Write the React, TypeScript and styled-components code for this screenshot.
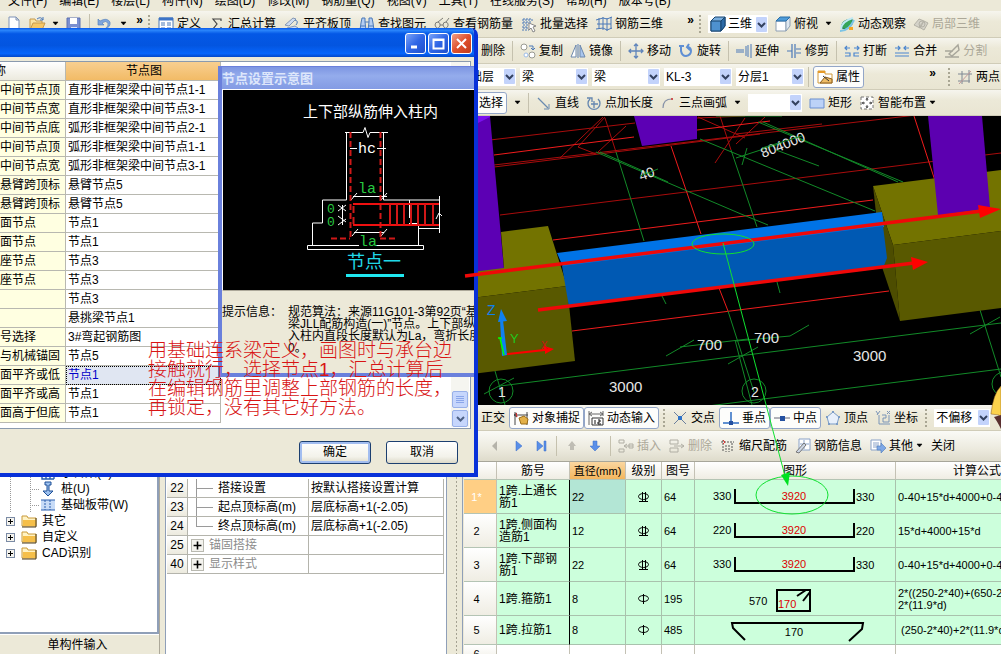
import React from 'react';
import styled, { createGlobalStyle, css } from 'styled-components';

const GlobalStyle = createGlobalStyle`
  * { box-sizing: border-box; }
  html, body, #root { height: 100%; }
  body {
    margin: 0;
    overflow: hidden;
    background: #ece9d8;
    color: #000;
    font: 12px/14px "Liberation Sans", "Noto Sans CJK SC", sans-serif;
  }
  button, select { font: inherit; color: inherit; }
`;

/* ---------- icons ---------- */

const B = '#4a78b8';
const L = '#9dbde8';
const G = '#9a9a92';

const glyphs: Record<string, React.ReactNode> = {
  file: <path d="M3 1h7l3 3v11H3z M10 1v3h3" fill="#fff" stroke="#7f93b8" />,
  folderOpen: (
    <>
      <path d="M1 14V3h5l1 2h6v3" fill="#fbe3a2" stroke="#c79a4c" />
      <path d="M1 14l3-7h12l-3 7z" fill="#f6c766" stroke="#c79a4c" />
      <path d="M8 3q4-3 6 1m0-3v3h-3" fill="none" stroke={B} />
    </>
  ),
  save: (
    <>
      <path d="M1 2h13v12H2l-1-1z" fill="#7b8fd0" stroke="#5c70b0" />
      <path d="M4 2h7v6H4z" fill="#fff" />
      <path d="M5 11h6v3H5z" fill="#d9e0f5" />
    </>
  ),
  undo: <path d="M1 3v6h6L5 7q4-3 6 0 1 3-3 6 6-2 5-7-3-5-10-1z" fill="#7fa5dd" stroke={B} strokeWidth=".6" />,
  define: (
    <>
      <path d="M1 2h14v12H1z" fill="#fff" stroke={B} />
      <path d="M1 3h14" stroke="#3d74c7" strokeWidth="3" />
      <path d="M3 7h4M3 9h4M3 12h4M9 7h4M9 9h4M9 12h4" stroke={B} />
    </>
  ),
  sigma: <path d="M12 5V3H4l4 5-4 5h8v-2" fill="none" stroke="#444" strokeWidth="1.2" />,
  flush: (
    <>
      <path d="M1 9l8-7 3 1-7 7zM3 12l8-2 3 2-8 3z" fill="#cfdcf0" stroke="#8598b4" />
      <path d="M11 4q4 1 1 5" stroke={B} fill="none" />
    </>
  ),
  binoculars: (
    <>
      <path d="M3 2h3v4l1 8H1l1-7zM10 2h3l1 5 1 7H9l1-8z" fill="#b3cdf2" stroke={B} />
      <path d="M6 6h4M2 10h4M10 10h4" stroke={B} />
    </>
  ),
  glasses: <path d="M1 9q0-3 3-3 3 1 2 4-3 5-5-1zM9 9q0-3 3-3 3 1 2 4-3 5-5-1zM6 9h3M4 6l5-4M12 6l3-4" fill="none" stroke="#7d7d78" />,
  batch: (
    <>
      <path d="M3 2v12M6 2v12M9 2v5M1 4h12M1 7h7M1 11h6M1 14h7" stroke={B} strokeDasharray="2 1" fill="none" />
      <path d="M8 7l7 3-3 1 2 4-2 1-2-4-2 2z" fill="#fff" stroke="#888" />
    </>
  ),
  rebar3d: <path d="M3 2v11M7 1v13M11 2v13M15 1v12M0 4l7-2 4 1 5-2M0 13l7-1 4 2 5-2M1 8h14" fill="none" stroke={B} />,
  cube: (
    <>
      <path d="M1 5l4-4h10v9l-4 5H1z" fill="#7aaede" stroke="#16446e" />
      <path d="M1 5h10v10H1z" fill="#4e91cf" stroke="#16446e" />
      <path d="M11 5l4-4v9l-4 5z" fill="#2c6aa6" stroke="#16446e" />
    </>
  ),
  topView: (
    <>
      <path d="M1 5h10v10H1z" fill="#fff" stroke="#8d9fb3" />
      <path d="M11 5l4-4v9l-4 5z" fill="#dfe8f0" stroke="#8d9fb3" />
      <path d="M1 5l4-4h10l-4 4z" fill="#4e9bd8" stroke="#2b6ea8" />
    </>
  ),
  orbit: (
    <>
      <path d="M3 12Q1 4 13 3 15 11 7 13z" fill="#35a55a" stroke="#1c7a4a" />
      <path d="M2 13Q3 5 14 2" stroke="#bfe8f5" strokeWidth="2" fill="none" />
      <path d="M1 15q9 0 14-11" stroke="#7cc4e6" strokeWidth="2" fill="none" />
      <path d="M10 11h4v3h-4z" fill="#f5a623" />
    </>
  ),
  local3d: (
    <>
      <path d="M1 9l5-6 5 2-4 7z M6 11l5-6 4 2-4 7z" fill="#d4d2c8" stroke="#b3b1a6" />
      <circle cx="9" cy="8" r="3" fill="none" stroke="#b3b1a6" />
    </>
  ),
  erase: <path d="M2 12l7-9 5 4-7 7z" fill="#f3b6b6" stroke="#a66" />,
  copy: (
    <>
      <circle cx="4" cy="4" r="3" fill="#fff" stroke={G} />
      <circle cx="12" cy="12" r="3" fill="#fff" stroke={G} />
      <circle cx="6" cy="12" r="2" fill="#fff" stroke={L} />
      <path d="M9 3h4v4m-2-2l2 2 2-2" fill="none" stroke={B} />
    </>
  ),
  mirror: (
    <>
      <path d="M6 2v12H1z" fill="#fff" stroke="#6c88ad" />
      <path d="M10 2v12h5z" fill="#a9c6ee" stroke="#6c88ad" />
      <path d="M8 1v14" stroke="#5b7fb5" />
    </>
  ),
  move: <path d="M8 1v14M1 8h14M6 3l2-2 2 2M6 13l2 2 2-2M3 6L1 8l2 2M13 6l2 2-2 2" fill="none" stroke="#5f84bb" strokeWidth="1.3" />,
  rotate: <path d="M3 3v5q1 5 5 5 5-1 5-5 0-3-3-4M1 3h5M11 1L9 4l3 3" fill="none" stroke="#5f8fd4" strokeWidth="2" />,
  extend: <path d="M0 7h8M0 9h8M10 3v10M12 2v12M15 1v14" stroke="#4a78b8" fill="none" />,
  trim: <path d="M1 8h5M6 1v14M9 1v14M10 6h5M10 10h5" stroke="#4a78b8" fill="none" strokeWidth="1.2" />,
  breakIt: <path d="M1 5h5M3 3L1 5l2 2M10 5h5m-2-2l2 2-2 2M1 10h5v3H1M15 10h-5v3h5" fill="none" stroke="#4a85cf" strokeWidth="1.2" />,
  join: <path d="M1 5h5M4 3l2 2-2 2M10 5h5M12 3l-2 2 2 2M1 10h14M1 13h14" fill="none" stroke="#4a85cf" strokeWidth="1.2" />,
  split: <path d="M1 8h8M1 14h14M5 11L14 2l1 5-7 6z" fill="none" stroke="#a8a69b" strokeWidth="1.4" />,
  props: (
    <>
      <path d="M1 2h7v3h7v9H1z" fill="#fff" stroke="#d29a3a" />
      <path d="M1 3h7" stroke="#e69a28" strokeWidth="2" />
      <path d="M3 14l5-6 7 2v4z" fill="#eebc66" stroke="#8b5d1c" />
      <path d="M6 7l6 5" stroke="#333" />
    </>
  ),
  twoPoint: (
    <>
      <path d="M5 2v13M12 1v13M1 5h14M1 12h12" fill="none" stroke="#7f8894" />
      <path d="M2 15L14 2" stroke="#c49a9a" />
    </>
  ),
  line: (
    <>
      <path d="M2 3l10 10" stroke="#6a8bb0" strokeWidth="1.2" />
      <path d="M13 9v5H8" stroke="#6a8bb0" fill="none" />
    </>
  ),
  pointLen: <path d="M4 4a6 6 0 1 0 8 0M1 3h5v4M8 6v7M5 9h7" fill="none" stroke="#6486b0" strokeWidth="1.3" />,
  arc: (
    <>
      <path d="M3 13Q3 4 12 4" fill="none" stroke="#8793a8" strokeWidth="1.2" />
      <path d="M11 3h2v2h-2z" fill="#c55" />
    </>
  ),
  rect: <path d="M1 4h14v9H1z" fill="#bcd2f7" stroke="#6a8fd0" />,
  smart: (
    <>
      <path d="M2 2h12v12H2z" fill="#fff" stroke="#777" strokeDasharray="3 2" />
      <path d="M8 3v3M8 10v3M3 8h3M10 8h3M7 5l1-2 1 2M7 11l1 2 1-2M5 7L3 8l2 1M11 7l2 1-2 1" fill="none" stroke="#555" />
    </>
  ),
  snap: (
    <>
      <path d="M2 2v13M14 2v13M1 5h14M4 3L1 5l3 2" stroke="#444" fill="none" />
      <path d="M6 8l5-2 4 3-1 5H8z" fill="#e3b048" stroke="#9a6d17" />
      <path d="M3 3l1 4" stroke="#d22" />
    </>
  ),
  dynInput: (
    <>
      <path d="M1 1v14M15 1v5M1 4h14M4 2L1 4l3 2M12 2l3 2-3 2" stroke="#666" fill="none" />
      <path d="M4 8h11v7H4z" fill="#fff" stroke="#333" />
      <path d="M7 10v4M10 10h2v2h-2v2h3" stroke="#111" fill="none" />
    </>
  ),
  cross: (
    <>
      <path d="M2 2l12 12M14 2L2 14" stroke="#6b7f9c" />
      <path d="M6 6h4v4H6z" fill="#2f74c9" />
    </>
  ),
  perp: (
    <>
      <path d="M8 2v11M0 13h16" stroke="#2d6cc4" strokeWidth="1.5" />
      <path d="M6 11h4v4H6z" fill="#2450a0" />
    </>
  ),
  mid: (
    <>
      <path d="M0 8h16" stroke="#667" />
      <path d="M6 6h5v5H6z" fill="#2450a0" />
    </>
  ),
  vertex: (
    <>
      <path d="M8 2l6 5-2 7H4L2 7z" fill="#e8f0fb" stroke="#7b9cc6" />
      <path d="M7 1h2v2H7zM13 6h2v2h-2zM1 6h2v2H1zM3 13h2v2H3zM11 13h2v2h-2z" fill="#7b9cc6" />
    </>
  ),
  coord: <path d="M4 5v9h11M1 1l2 3M5 1L2 5M7 5h4v3H8v4h6V5M12 1l3 3M15 1l-3 3" fill="none" stroke="#7b95b8" />,
  prev: <path d="M10 3v10L5 8z" fill="#b5b3aa" />,
  next: <path d="M6 3v10l6-5z" fill="#5a8fe8" stroke="#3b6fcb" strokeWidth=".5" />,
  last: <path d="M4 3v10l6-5zM11 3h2v10h-2z" fill="#5a8fe8" stroke="#3b6fcb" strokeWidth=".5" />,
  up: <path d="M8 3l4 5h-2v4H6V8H4z" fill="#bfbdb4" />,
  down: <path d="M8 13l5-5h-3V3H6v5H3z" fill="#5a8fe8" stroke="#3b6fcb" strokeWidth=".5" />,
  insertRow: <path d="M1 2h5v3H1zM1 11h5v3H1zM6 8h9M9 6L6 8l3 2M11 6h4v4h-4z" fill="none" stroke="#b0aea4" />,
  deleteRow: <path d="M1 2h8v4H1zM1 10h8v4H1zM5 8h10M12 6l3 2-3 2" fill="none" stroke="#b0aea4" />,
  scale: (
    <>
      <path d="M3 2v12M6 7v7M9 7v7M12 5v9M1 4h13" stroke="#555" fill="none" strokeDasharray="2 1" />
      <path d="M3 2l2 2-2 2" stroke="#d33" fill="none" />
    </>
  ),
  info: (
    <>
      <path d="M4 1h11v11H4z" fill="#fff" stroke="#8aa2c8" />
      <path d="M9 2v9M5 6h9" stroke="#8aa2c8" />
      <path d="M1 14l8-9 2 2-7 8z" fill="#ccd6e6" stroke="#777" />
    </>
  ),
  other: (
    <>
      <path d="M1 2h10v10H1z" fill="#fff" stroke="#8aa2c8" />
      <path d="M3 5h6M3 7h6M3 9h4" stroke="#8aa2c8" />
      <path d="M7 8h4V5l5 5-5 5v-3H7z" fill="#7fa8e6" stroke={B} strokeWidth=".6" />
    </>
  ),
  pileCap: <path d="M2 2h12v12M2 2v12h12M6 2v12M10 2v12M2 8h12" fill="none" stroke="#2a5fae" strokeWidth="1.4" />,
  pile: <path d="M5 1h6v3H9v6h4l-5 5-5-5h4V4H5z" fill="#9cc0ee" stroke="#1c4f96" />,
  strip: (
    <>
      <path d="M1 3h14v10H1z" fill="#c7dbf7" />
      <path d="M1 3h14M1 13h14" stroke="#2a5fae" />
      <path d="M5 3v10M10 3v10" stroke="#2a5fae" strokeDasharray="2 1" />
    </>
  ),
  folder: (
    <>
      <path d="M1 13V3h5l1 2h8v8z" fill="#fff3c4" stroke="#c99a3b" />
      <path d="M2 7h13v6H2z" fill="#f5bf4a" />
      <path d="M1 14h14V5" fill="none" stroke="#4a3a18" />
    </>
  ),
};

const IconSvg = styled.svg`
  flex: none;
  display: block;
  overflow: visible;
`;
const Icon = ({ name }: { name: string }) => (
  <IconSvg width="16" height="16" viewBox="0 0 16 16" aria-hidden="true">
    {glyphs[name]}
  </IconSvg>
);

/* ---------- tool bars ---------- */

const AppShell = styled.div`
  position: relative;
  display: flex;
  flex-direction: column;
  height: 100%;
  overflow: hidden;
`;

const MenuBar = styled.nav`
  flex: none;
  display: flex;
  align-items: flex-end;
  gap: 12px;
  height: 11px;
  padding: 0 8px 3px;
  overflow: hidden;
`;
const MenuItem = styled.button`
  flex: none;
  padding: 0;
  border: 0;
  background: none;
  line-height: 14px;
  white-space: nowrap;
`;

const Toolbar = styled.div<{ $indent?: number; $tall?: boolean }>`
  flex: none;
  display: flex;
  align-items: center;
  gap: 7px;
  height: ${p => (p.$tall ? 31 : 26)}px;
  padding-left: ${p => p.$indent ?? 0}px;
  overflow: hidden;
  white-space: nowrap;
  border-bottom: 1px solid ${p => (p.$tall ? '#a7a69a' : '#d0ccb8')};
  background: linear-gradient(#f6f5ee, #ece9d8 40%, #e9e5d2);
  ${p => p.$tall && css`background: linear-gradient(#fafaf6, #eceade 60%, #dedbcb);`}
`;
const MainToolbar = styled(Toolbar)`
  height: 27px;
  gap: 0;
`;
const Group = styled.div<{ $width?: number; $gap?: number }>`
  flex: none;
  display: flex;
  align-items: center;
  gap: ${p => p.$gap ?? 8}px;
  ${p => p.$width && css`width: ${p.$width}px;`}
`;
const Tool = styled.button<{ $framed?: boolean }>`
  flex: none;
  display: flex;
  align-items: center;
  gap: 3px;
  height: 22px;
  padding: 0;
  border: 0;
  background: none;
  white-space: nowrap;
  &:disabled { color: #aca899; }
  ${p => p.$framed && css`
    padding: 0 3px;
    border: 1px solid #93a6c8;
    border-radius: 3px;
    background: #fdfdfb;
  `}
`;
const Sep = styled.span`
  flex: none;
  width: 1px;
  height: 20px;
  background: #c5c1ae;
`;
const Grip = styled.span`
  flex: none;
  width: 2px;
  height: 18px;
  background: repeating-linear-gradient(#a9a693 0 2px, transparent 2px 4px);
`;
const More = styled.span`
  flex: none;
  margin-left: auto;
  padding: 0 5px 8px 0;
  font-weight: bold;
  line-height: 12px;
`;
const Caret = () => (
  <IconSvg width="7" height="4" viewBox="0 0 7 4" aria-hidden="true">
    <path d="M1 0h5L3.500 3z" fill="#000" stroke="#000" strokeWidth=".5" />
  </IconSvg>
);

const ComboFrame = styled.label<{ $width: number }>`
  flex: none;
  display: flex;
  align-items: center;
  gap: 2px;
  width: ${p => p.$width}px;
  height: 18px;
  padding: 1px 1px 1px 2px;
  background: #fff;
`;
const ComboSelect = styled.select`
  flex: 1;
  min-width: 0;
  height: 16px;
  padding: 0;
  border: 0;
  outline: 0;
  appearance: none;
  background: none;
  line-height: 16px;
`;
const ComboArrow = () => (
  <IconSvg width="11" height="15" viewBox="0 0 11 15" aria-hidden="true">
    <rect width="11" height="15" rx="1" fill="#c3d3fb" />
    <path d="M2 6l3.500 3.500L9 6" fill="none" stroke="#33415f" strokeWidth="2" />
  </IconSvg>
);
const Combo = ({ value, width, name, icon }: { value: string; width: number; name: string; icon?: string }) => (
  <ComboFrame $width={width}>
    {icon && <Icon name={icon} />}
    <ComboSelect aria-label={name} defaultValue={value}>
      <option>{value}</option>
    </ComboSelect>
    <ComboArrow />
  </ComboFrame>
);

const TextTool = ({ icon, label, disabled, framed, caret }: {
  icon?: string; label: string; disabled?: boolean; framed?: boolean; caret?: boolean;
}) => (
  <Tool type="button" disabled={disabled} $framed={framed}>
    {icon && <Icon name={icon} />}
    {label}
    {caret && <Caret />}
  </Tool>
);
const IconTool = ({ icon, label }: { icon: string; label: string }) => (
  <Tool type="button" aria-label={label}><Icon name={icon} /></Tool>
);

/* ---------- workspace ---------- */

const Workspace = styled.main`
  flex: 1;
  min-height: 0;
  display: grid;
  grid-template-columns: 160px 287px 16px minmax(0, 1fr);
  background: #ece9d8;
`;

const TreeColumn = styled.aside`
  display: flex;
  flex-direction: column;
  min-height: 0;
  border-right: 1px solid #aca899;
`;
const Tree = styled.ul`
  flex: 1;
  min-height: 0;
  margin: 0;
  padding: 349px 0 0;
  overflow: hidden;
  list-style: none;
  background: #fff;
  border-right: 2px solid #8f9fb8;
  border-bottom: 2px solid #8f9fb8;
`;
const dots = 'repeating-linear-gradient(#999 0 1px, transparent 1px 2px)';
const dotsAcross = 'repeating-linear-gradient(90deg, #999 0 1px, transparent 1px 2px)';
const TreeRow = styled.li`
  display: flex;
  align-items: center;
  height: 16px;
  white-space: nowrap;
`;
const Guide = styled.span<{ $across?: boolean }>`
  flex: none;
  width: 20px;
  height: 16px;
  background: ${p => (p.$across ? `${dots} 10px 0 / 1px 100% no-repeat, ${dotsAcross} 10px 8px / 10px 1px no-repeat` : `${dots} 10px 0 / 1px 100% no-repeat`)};
`;
const TreeLabel = styled.span`
  padding-left: 5px;
`;
const Expander = styled.button`
  flex: none;
  display: grid;
  place-items: center;
  width: 9px;
  height: 9px;
  margin: 0 6px;
  padding: 0;
  border: 1px solid #7b8ba5;
  background: #f4f3ee;
`;
const Plus = ({ size }: { size: number }) => (
  <IconSvg width={size} height={size} viewBox="0 0 7 7" aria-hidden="true">
    <path d="M3 1h1v2h2v1H4v2H3V4H1V3h2z" fill="#000" />
  </IconSvg>
);
const PanelButton = styled.button`
  flex: none;
  height: 20px;
  padding: 0 4px 0 0;
  border: 0;
  border-top: 1px solid #fff;
  background: #ece9d8;
`;

const PropertyPanel = styled.section`
  min-height: 0;
  margin-left: 5px;
  padding: 363px 2px 0 1px;
  overflow: hidden;
  background: #fff;
  border: 1px solid #8f9fb8;
  border-width: 0 1px;
`;
const PropertyTable = styled.table`
  width: 100%;
  table-layout: fixed;
  border-spacing: 0;
  td, th {
    height: 19px;
    padding: 0 2px;
    border-right: 1px solid #b4b4ac;
    border-bottom: 1px solid #b4b4ac;
    font-weight: normal;
    text-align: left;
    white-space: nowrap;
  }
  th {
    padding: 0;
    text-align: center;
    background: linear-gradient(#fff, #eceade);
  }
`;
const PropertyName = styled.td<{ $group?: boolean; $last?: boolean }>`
  && {
    padding-left: ${p => (p.$group ? 3 : 30)}px;
    color: ${p => (p.$group ? '#8c8c8c' : '#000')};
    ${p => !p.$group && css`
      background:
        linear-gradient(#9a9a9a, #9a9a9a) 8px 0 / 1px ${p.$last ? '10px' : '100%'} no-repeat,
        linear-gradient(#9a9a9a, #9a9a9a) 8px 9px / 17px 1px no-repeat;
    `}
  }
`;
const PropertyExpander = styled(Expander)`
  display: inline-grid;
  width: 13px;
  height: 13px;
  margin: 0 5px 0 0;
  vertical-align: middle;
  border-color: #b9b9b0;
`;

const Splitter = styled.div`
  background: radial-gradient(circle, #a5a292 1px, transparent 1px) 8px 0 / 3px 4px repeat-y;
  border-right: 1px solid #8f9fb8;
`;

const RightColumn = styled.div`
  display: flex;
  flex-direction: column;
  min-width: 0;
  min-height: 0;
  padding-left: 1px;
`;
const Viewport = styled.svg`
  flex: none;
  display: block;
  width: 100%;
  height: 289px;
  background: #000;
  font-family: "Liberation Sans", sans-serif;
`;

const SheetWrap = styled.div`
  flex: 1;
  min-height: 0;
  overflow: hidden;
  background: #fff;
`;
const Sheet = styled.table`
  width: max(100%, 595px);
  table-layout: fixed;
  border-spacing: 0;
  line-height: 12px;
  th {
    height: 18px;
    padding: 0;
    border-right: 1px solid #c4c1b4;
    border-bottom: 1px solid #b4c4b4;
    font-weight: normal;
    background: linear-gradient(#fff, #efede3);
  }
  td {
    padding: 0 2px;
    border-right: 1px solid #a9c2ad;
    border-bottom: 1px solid #a9c2ad;
    background: #ccffdc;
  }
`;
const SheetRow = styled.tr<{ $height: number }>`
  height: ${p => p.$height}px;
`;
const ColumnHead = styled.th<{ $active?: boolean }>`
  white-space: nowrap;
  ${p => p.$active && css`&& { background: linear-gradient(#fbd7a0, #f3b65e); font-size: 11px; }`}
`;
const RowHead = styled.th<{ $active?: boolean }>`
  && {
    padding-right: 7px;
    font-size: 11px;
    ${p => p.$active && css`color: #fff; background: #ffcf85;`}
  }
`;
const NameCell = styled.td`
  && { border-right-color: #000; }
`;
const NumberCell = styled.td<{ $active?: boolean }>`
  font-size: 11px;
  white-space: pre;
  ${p => p.$active && css`&& { background: #b3e6d5; }`}
`;
const GradeCell = styled.td`
  svg { margin: 0 auto; }
`;
const ShapeCell = styled.td`
  && { padding: 0; }
  svg { display: block; font-size: 11px; }
`;
const BlankCell = styled.td`
  && { background: #fff; border-color: #c4c1b4; }
`;

const Grade = ({ level }: { level: number }) => (
  <IconSvg width="11" height="12" viewBox="0 0 11 12" aria-hidden="true">
    <ellipse cx="5.500" cy="5.500" rx="5" ry="3" fill="none" stroke="#000" />
    <path d={level === 3 ? 'M4.500 1v9M7.500 1v9M1 10.500h9' : 'M5.500 1v10'} stroke="#000" fill="none" />
  </IconSvg>
);

const UShape = ({ hook }: { hook: string }) => (
  <svg width="200" height="33" viewBox="0 0 200 33">
    <path d="M40 9v14h119V9" fill="none" stroke="#000" strokeWidth="2" />
    <text x="18" y="20">{hook}</text>
    <text x="161" y="21">{hook}</text>
    <text x="99" y="20" textAnchor="middle" fill="#d00">3920</text>
  </svg>
);
const Stirrup = () => (
  <svg width="200" height="33" viewBox="0 0 200 33">
    <path d="M82 8h33v21H82zM102 14l9-6M108 19l7-9" fill="none" stroke="#000" strokeWidth="2" />
    <text x="54" y="23">570</text>
    <text x="83" y="26" fill="#d00">170</text>
  </svg>
);
const Tie = () => (
  <svg width="200" height="28" viewBox="0 0 200 28">
    <path d="M50 24L38 12l-1-5h131l-1 6-13 12" fill="none" stroke="#000" strokeWidth="2" />
    <text x="99" y="20" textAnchor="middle">170</text>
  </svg>
);

const bars = [
  { name: '1跨.上通长筋1', d: '22', level: 3, fig: '64', shape: <UShape hook="330" />, f: '0-40+15*d+4000+0-40+15*d', h: 34 },
  { name: '1跨.侧面构造筋1', d: '12', level: 3, fig: '64', shape: <UShape hook="220" />, f: '15*d+4000+15*d', h: 34 },
  { name: '1跨.下部钢筋1', d: '22', level: 3, fig: '64', shape: <UShape hook="330" />, f: '0-40+15*d+4000+0-40+15*d', h: 34 },
  { name: '1跨.箍筋1', d: '8', level: 1, fig: '195', shape: <Stirrup />, f: '2*((250-2*40)+(650-2*40))+\n2*(11.9*d)', h: 34 },
  { name: '1跨.拉筋1', d: '8', level: 1, fig: '485', shape: <Tie />, f: ' (250-2*40)+2*(11.9*d)', h: 29 },
];

const Scene = () => (
  <Viewport viewBox="464 116 537 289" preserveAspectRatio="xMinYMin slice" role="img" aria-label="三维视图">
    <g stroke="#a80c0c" fill="none">
      <path d="M490 140L635 123M697 118L745 116M494 165L1001 105M494 167L760 134M500 215L1001 153" />
      <path d="M603 117L560 158M605 117L578 147L596 154M626 126L598 152M698 117L745 138M745 118L715 163M765 117L736 144M605 118L616 152" />
      <path d="M736 134L822 124M720 116L731 150" />
    </g>
    <g stroke="#f01c1c" fill="none">
      <path d="M494 155L634 137M697 130L770 121M553 240L873 200M671 146L701 234M914 116L938 190M572 331L889 291M719 288L728 311" />
    </g>
    <g stroke="#128a28" fill="none">
      <path d="M596 152L741 214L768 225M600 152L668 182M616 152L644 241M700 139L875 211M758 122L903 182M763 122L898 182M776 150L819 166" />
      <path d="M731 150L757 227M728 311L754 392M662 296L666 304M777 282L780 293M716 116L782 116M736 158L782 143M742 165L747 148" />
      <path d="M500 386L1001 323M495 371L505 405M484 394L514 378M700 407L1001 369M980 310L1001 377M970 334L1000 317" />
      <path d="M666 356L694 340M680 347L748 339M736 341L790 336L809 325M728 364L758 347M735 340L752 405" />
      <circle cx="501" cy="391" r="12" />
      <circle cx="754" cy="391" r="12" />
      <circle cx="1004" cy="384" r="12" />
    </g>
    <path d="M634 116h63v23l-55 7z" fill="#5c00b4" />
    <path d="M464 116h26l14 153-40 5z" fill="#5c00b4" />
    <path d="M464 116h26v1l-12 6h-14z" fill="#7a10ee" />
    <path d="M501 232l47-6 19 60-103 13v-26l40-5z" fill="#737300" />
    <path d="M464 299l103-13 8 75-111 14z" fill="#595900" />
    <path d="M873 186l128-16v61l-108 14z" fill="#737300" />
    <path d="M873 186l20 59 7 76-18-54z" fill="#4d4d00" />
    <path d="M893 245l108-14v77l-101 13z" fill="#595900" />
    <path d="M557 253l325-41 2 15-321 40z" fill="#0073e6" />
    <path d="M562 266l321-40 4 32-4 10-314 39z" fill="#0059b3" />
    <path d="M928 116h54l8 92-48 7h-4z" fill="#5c00b0" />
    <g fill="#e6e6e6" fontSize="15">
      <text transform="translate(641 181) rotate(-20)" fontSize="14">40</text>
      <text transform="translate(763 158) rotate(-22)" fontSize="14">804000</text>
      <text x="697" y="350">700</text>
      <text x="754" y="343">700</text>
      <text x="609" y="392">3000</text>
      <text x="853" y="361">3000</text>
      <text x="498" y="397" fontSize="14">1</text>
      <text x="751" y="397" fontSize="14">2</text>
    </g>
    <path d="M640 176l18-7M762 148l40-12" stroke="#128a28" />
    <path d="M500 320h3l4 35-5 1z" fill="#1080f0" />
    <path d="M501 309l6 12-9 1z" fill="#1080f0" />
    <path d="M507 353l37-4v-3l10 3-9 5v-3l-38 4z" fill="#f00" />
    <path d="M500 338l4 17M498 338h4" stroke="#0f0" strokeWidth="1.5" />
    <text x="487" y="315" fontSize="14" fill="#1080f0">Z</text>
    <text x="510" y="343" fontSize="13" fill="#1fc81f">Y</text>
    <text x="541" y="349" fontSize="10" fill="#d01010">X</text>
  </Viewport>
);

/* ---------- calculation settings dialog ---------- */

const Dialog = styled.section`
  position: absolute;
  left: 0;
  top: 28px;
  width: 478px;
  overflow: hidden;
  border: solid #0831d9;
  border-width: 0 4px 4px 0;
  border-radius: 0 7px 0 0;
  background: #ece9d8;
`;
const TitleBar = styled.header`
  display: flex;
  align-items: center;
  justify-content: flex-end;
  gap: 2px;
  height: 29px;
  padding: 2px 2px 0 0;
  background: linear-gradient(#0a58e8, #2a85fb 8%, #0458e6 20%, #0355e0 60%, #0665fb 88%, #0347c8);
`;
const CaptionButton = styled.button<{ $close?: boolean }>`
  display: grid;
  place-items: center;
  width: 21px;
  height: 21px;
  padding: 0;
  border: 1px solid #fff;
  border-radius: 3px;
  background: ${p => (p.$close ? 'linear-gradient(135deg, #f0a088, #e0502c 50%, #c03c1c)' : 'linear-gradient(135deg, #7ba4f8, #2f66e6 50%, #2050cc)')};
`;
const ListBox = styled.div`
  position: relative;
  display: flex;
  margin: 4px 3px 0 0;
  padding-bottom: 5px;
  border: solid #8a9aae;
  border-width: 1px 1px 1px 0;
  background: #fff;
`;
const NodeTable = styled.table`
  flex: none;
  width: 221px;
  table-layout: fixed;
  border-spacing: 0;
  td, th {
    height: 19px;
    padding: 0 0 0 2px;
    border-right: 1px solid #b8b8b0;
    border-bottom: 1px solid #b8b8b0;
    font-weight: normal;
    white-space: nowrap;
    overflow: hidden;
  }
`;
const ParamHead = styled.th`
  && { text-align: left; text-indent: -8px; background: linear-gradient(#fff, #eceade); }
`;
const FigureHead = styled.th`
  background: linear-gradient(#f8cf90, #f2bb66);
`;
const ParamCell = styled.td`
  && { padding: 0; background: #ffffe1; }
`;
const FigureCell = styled.td<{ $selected?: boolean }>`
  ${p => p.$selected && css`
    && { color: #0000c8; background: #e0e6f2; outline: 1px dotted #000; outline-offset: -1px; }
  `}
`;
const ScrollTrack = styled.div`
  display: flex;
  flex-direction: column;
  justify-content: flex-end;
  gap: 2px;
  width: 18px;
  margin: 0 1px -4px auto;
  background: #f5f5f0;
`;
const ScrollPart = styled.button`
  display: grid;
  place-items: center;
  width: 16px;
  height: 17px;
  margin-left: 1px;
  padding: 0;
  border: 1px solid #98b0e8;
  border-radius: 2px;
  background: #c6d6fc;
`;
const Footer = styled.footer`
  display: flex;
  align-items: center;
  justify-content: flex-end;
  gap: 15px;
  height: 44px;
  padding: 2px 16px 0 0;
`;
const PushButton = styled.button<{ $primary?: boolean }>`
  width: 72px;
  height: 23px;
  padding: 0;
  border: 1px solid #1c3f70;
  border-radius: 3px;
  background: linear-gradient(#fff, #f3f2ea 70%, #dcd9c9);
  ${p => p.$primary && css`box-shadow: inset 0 0 0 2px #a2bdf0;`}
`;

const FigureWindow = styled.section`
  position: absolute;
  left: 218px;
  top: 38px;
  width: 256px;
  border: solid #6a80dc;
  border-width: 1px 0 4px 4px;
  background: #ece9d8;
`;
const FigureTitle = styled.h2`
  margin: 0;
  height: 22px;
  padding-top: 2px;
  color: #dde6fb;
  font-size: 13px;
  line-height: 20px;
  background: linear-gradient(#7d96e2, #94acec 40%, #839be4);
`;
const Figure = styled.svg`
  display: block;
  height: 202px;
  width: 100%;
  border-top: 1px solid #fff;
  border-left: 1px solid #fff;
  border-bottom: 1px solid #aca899;
  background: #000;
`;
const Hint = styled.dl`
  display: flex;
  gap: 5px;
  height: 82px;
  margin: 0;
  padding: 15px 0 0;
  overflow: hidden;
  line-height: 12px;
  white-space: nowrap;
  dt { flex: none; width: 61px; }
  dd { margin: 0; }
`;

const JointFigure = () => (
  <Figure viewBox="223 90 251 200" preserveAspectRatio="xMinYMin slice" role="img" aria-label="节点一">
    <text x="303" y="117" fontSize="15" fill="#fff">上下部纵筋伸入柱内</text>
    <g stroke="#fff" fill="none">
      <path d="M345 132.500h18l2-5 3 10 2-5h18M346.500 132v68h-24v23h-10v22M383.500 132v68h56M439.500 196v37M439 228.500h-20M409.500 200v18M409 223.500h9.500v22M307.500 245.500h116v4h-116z" />
      <path d="M350 148.500h7M377 148.500h9M353 196.500h34M351 200l6-7M381 200l6-7M354 232.500h30M352 236l6-7M381 236l6-7M436 219l3-6 3 3M338 205l8 6M346 205l-8 6M342.500 205v20M338 216l8 6M346 219l-8 6" />
    </g>
    <g stroke="#d01818" fill="none">
      <path d="M350.500 132v106M380.500 132v106M331 238.500h19M380 238.500h18" strokeWidth="2" strokeDasharray="6 3" />
      <path d="M353 204h86M353 225h86" strokeWidth="2" stroke="#f01010" />
      <path d="M353.500 206v18" strokeWidth="2" strokeDasharray="7 4" />
      <path d="M390 204v21M397 204v21M404 204v21M411 204v21M418 204v21M425 204v21M433 204v21" strokeWidth="2" />
    </g>
    <path d="M359 235h17v12h-17z" fill="#000" />
    <g fontFamily="Liberation Mono, monospace" fontSize="15">
      <text x="358" y="153" fill="#fff">hc</text>
      <g fill="#28c840">
        <text x="358" y="193">la</text>
        <text x="359" y="246">la</text>
        <text x="327" y="213" fontSize="13">0</text>
        <text x="327" y="226" fontSize="13">0</text>
      </g>
    </g>
    <text x="347" y="268" fontSize="18" fill="#20d8e8">节点一</text>
    <path d="M346 275.500h58" stroke="#20e8f0" strokeWidth="3" />
  </Figure>
);

const nodes: [string, string][] = [
  ['中间节点顶', '直形非框架梁中间节点1-1'],
  ['中间节点宽', '直形非框架梁中间节点3-1'],
  ['中间节点底', '弧形非框架梁中间节点2-1'],
  ['中间节点顶', '弧形非框架梁中间节点1-1'],
  ['中间节点宽', '弧形非框架梁中间节点3-1'],
  ['悬臂跨顶标', '悬臂节点5'],
  ['悬臂跨顶标', '悬臂节点5'],
  ['面节点', '节点1'],
  ['面节点', '节点1'],
  ['座节点', '节点3'],
  ['座节点', '节点3'],
  ['', '节点3'],
  ['', '悬挑梁节点1'],
  ['号选择', '3#弯起钢筋图'],
  ['与机械锚固', '节点5'],
  ['面平齐或低', '节点1'],
  ['面平齐或高', '节点1'],
  ['面高于但底', '节点1'],
];

const NodeDialog = () => (
  <Dialog role="dialog" aria-label="节点设置">
    <TitleBar>
      <CaptionButton type="button" aria-label="最小化">
        <svg width="13" height="13"><path d="M2 10h6" stroke="#fff" strokeWidth="3" /></svg>
      </CaptionButton>
      <CaptionButton type="button" aria-label="最大化">
        <svg width="13" height="13"><path d="M1.500 2.500h10v9h-10zM1 3h11" fill="none" stroke="#fff" strokeWidth="2" /></svg>
      </CaptionButton>
      <CaptionButton type="button" aria-label="关闭" $close>
        <svg width="13" height="13"><path d="M2 2l9 9M11 2l-9 9" stroke="#fff" strokeWidth="2" /></svg>
      </CaptionButton>
    </TitleBar>
    <ListBox>
      <NodeTable>
        <colgroup><col style={{ width: 66 }} /><col /></colgroup>
        <thead>
          <tr><ParamHead>称</ParamHead><FigureHead>节点图</FigureHead></tr>
        </thead>
        <tbody>
          {nodes.map(([param, figure], i) => (
            <tr key={i}>
              <ParamCell>{param}</ParamCell>
              <FigureCell $selected={i === 15}>{figure}</FigureCell>
            </tr>
          ))}
        </tbody>
      </NodeTable>
      <ScrollTrack>
        <ScrollPart type="button" aria-label="滚动">
          <svg width="8" height="8"><path d="M0 .5h8M0 2.500h8M0 4.500h8M0 6.500h8" stroke="#8aa6ea" /></svg>
        </ScrollPart>
        <ScrollPart type="button" aria-label="向下">
          <svg width="9" height="6"><path d="M1 1l3.500 3.500L8 1" fill="none" stroke="#4d6185" strokeWidth="2" /></svg>
        </ScrollPart>
      </ScrollTrack>
    </ListBox>
    <Footer>
      <PushButton type="button" $primary>确定</PushButton>
      <PushButton type="button">取消</PushButton>
    </Footer>
    <FigureWindow>
      <FigureTitle>节点设置示意图</FigureTitle>
      <JointFigure />
      <Hint>
        <dt>提示信息：</dt>
        <dd>
          规范算法：来源11G101-3第92页“基础<br />
          梁JLL配筋构造(一)”节点。上下部纵<br />
          入柱内直段长度默认为La，弯折长度<br />
          0。
        </dd>
      </Hint>
    </FigureWindow>
  </Dialog>
);

/* ---------- annotations over the page ---------- */

const Note = styled.p`
  position: absolute;
  left: 148px;
  top: 341px;
  margin: 0;
  color: #d81414;
  font-size: 19px;
  font-weight: 300;
  line-height: 19px;
  white-space: nowrap;
  pointer-events: none;
`;
const Marks = styled.svg`
  position: absolute;
  left: 0;
  top: 0;
  pointer-events: none;
`;

const menus = ['文件(F)', '编辑(E)', '楼层(L)', '构件(N)', '绘图(D)', '修改(M)', '钢筋量(Q)', '视图(V)', '工具(T)', '在线服务(S)', '帮助(H)', '版本号(B)'];

export default function App() {
  return (
    <AppShell>
      <GlobalStyle />
      <MenuBar>{menus.map(m => <MenuItem type="button" key={m}>{m}</MenuItem>)}</MenuBar>

      <MainToolbar $indent={6}>
        <Group $width={142} $gap={7}>
          <IconTool icon="file" label="新建" />
          <IconTool icon="folderOpen" label="打开" />
          <Caret />
          <IconTool icon="save" label="保存" />
          <Sep />
          <IconTool icon="undo" label="撤销" />
          <Caret />
          <More>»</More>
        </Group>
        <Group $width={551}>
          <Grip />
          <TextTool icon="define" label="定义" />
          <TextTool icon="sigma" label="汇总计算" />
          <TextTool icon="flush" label="平齐板顶" />
          <TextTool icon="binoculars" label="查找图元" />
          <TextTool icon="glasses" label="查看钢筋量" />
          <TextTool icon="batch" label="批量选择" />
          <TextTool icon="rebar3d" label="钢筋三维" />
          <More>»</More>
        </Group>
        <Group $gap={7}>
          <Grip />
          <Combo icon="cube" value="三维" width={60} name="视图模式" />
          <TextTool icon="topView" label="俯视" />
          <Caret />
          <TextTool icon="orbit" label="动态观察" />
          <TextTool icon="local3d" label="局部三维" disabled />
        </Group>
      </MainToolbar>

      <Toolbar $indent={462}>
        <TextTool icon="erase" label="删除" />
        <Sep />
        <TextTool icon="copy" label="复制" />
        <TextTool icon="mirror" label="镜像" />
        <Sep />
        <TextTool icon="move" label="移动" />
        <TextTool icon="rotate" label="旋转" />
        <Sep />
        <TextTool icon="extend" label="延伸" />
        <TextTool icon="trim" label="修剪" />
        <Sep />
        <TextTool icon="breakIt" label="打断" />
        <TextTool icon="join" label="合并" />
        <TextTool icon="split" label="分割" disabled />
      </Toolbar>

      <Toolbar $indent={456}>
        <Group $width={485} $gap={4}>
          <Combo value="基础层" width={60} name="楼层" />
          <Combo value="梁" width={68} name="构件类型" />
          <Combo value="梁" width={68} name="构件" />
          <Combo value="KL-3" width={68} name="构件名称" />
          <Combo value="分层1" width={68} name="分层" />
          <Sep />
          <TextTool icon="props" label="属性" framed />
          <More>»</More>
        </Group>
        <Grip />
        <TextTool icon="twoPoint" label="两点" />
      </Toolbar>

      <Toolbar $indent={456}>
        <TextTool icon="line" label="选择" framed />
        <Caret />
        <Sep />
        <TextTool icon="line" label="直线" />
        <TextTool icon="pointLen" label="点加长度" />
        <TextTool icon="arc" label="三点画弧" />
        <Caret />
        <Combo value="" width={54} name="画弧方式" />
        <TextTool icon="rect" label="矩形" />
        <TextTool icon="smart" label="智能布置" caret />
      </Toolbar>

      <Workspace>
        <TreeColumn>
          <Tree>
            <TreeRow><Guide /><Guide $across /><Icon name="pileCap" /><TreeLabel>承台梁(F)</TreeLabel></TreeRow>
            <TreeRow><Guide /><Guide $across /><Icon name="pile" /><TreeLabel>桩(U)</TreeLabel></TreeRow>
            <TreeRow><Guide /><Guide $across /><Icon name="strip" /><TreeLabel>基础板带(W)</TreeLabel></TreeRow>
            {['其它', '自定义', 'CAD识别'].map(label => (
              <TreeRow key={label}>
                <Expander type="button" aria-label={label}><Plus size={7} /></Expander>
                <Icon name="folder" />
                <TreeLabel>{label}</TreeLabel>
              </TreeRow>
            ))}
          </Tree>
          <PanelButton type="button">单构件输入</PanelButton>
        </TreeColumn>

        <PropertyPanel>
          <PropertyTable>
            <colgroup><col style={{ width: 21 }} /><col style={{ width: 121 }} /><col /></colgroup>
            <tbody>
              <tr><th>22</th><PropertyName>搭接设置</PropertyName><td>按默认搭接设置计算</td></tr>
              <tr><th>23</th><PropertyName>起点顶标高(m)</PropertyName><td>层底标高+1(-2.05)</td></tr>
              <tr><th>24</th><PropertyName $last>终点顶标高(m)</PropertyName><td>层底标高+1(-2.05)</td></tr>
              {[['25', '锚固搭接'], ['40', '显示样式']].map(([n, label]) => (
                <tr key={n}>
                  <th>{n}</th>
                  <PropertyName $group>
                    <PropertyExpander type="button" aria-label={label}><Plus size={11} /></PropertyExpander>
                    {label}
                  </PropertyName>
                  <td />
                </tr>
              ))}
            </tbody>
          </PropertyTable>
        </PropertyPanel>

        <Splitter />

        <RightColumn>
          <Scene />
          <Toolbar $indent={17}>
            <Group $gap={4}>
              <TextTool label="正交" />
              <Group $gap={0}>
                <TextTool icon="snap" label="对象捕捉" framed />
                <TextTool icon="dynInput" label="动态输入" framed />
              </Group>
              <Grip />
            </Group>
            <Group $gap={4}>
              <TextTool icon="cross" label="交点" />
              <Group $gap={0}>
                <TextTool icon="perp" label="垂点" framed />
                <TextTool icon="mid" label="中点" framed />
              </Group>
              <TextTool icon="vertex" label="顶点" />
            </Group>
            <TextTool icon="coord" label="坐标" />
            <Grip />
            <Combo value="不偏移" width={56} name="偏移方式" />
          </Toolbar>
          <Toolbar $indent={23} $tall>
            <IconTool icon="prev" label="上一个" />
            <IconTool icon="next" label="下一个" />
            <IconTool icon="last" label="最后" />
            <Sep />
            <IconTool icon="up" label="上移" />
            <IconTool icon="down" label="下移" />
            <Sep />
            <Group>
              <TextTool icon="insertRow" label="插入" disabled />
              <TextTool icon="deleteRow" label="删除" disabled />
              <TextTool icon="scale" label="缩尺配筋" />
              <TextTool icon="info" label="钢筋信息" />
              <TextTool icon="other" label="其他" caret />
              <TextTool label="关闭" />
            </Group>
          </Toolbar>
          <SheetWrap>
            <Sheet>
              <colgroup>
                {[33, 73, 56, 36, 33, 201].map((w, i) => <col key={i} style={{ width: w }} />)}
                <col />
              </colgroup>
              <thead>
                <tr>
                  <ColumnHead />
                  <ColumnHead>筋号</ColumnHead>
                  <ColumnHead $active>直径(mm)</ColumnHead>
                  <ColumnHead>级别</ColumnHead>
                  <ColumnHead>图号</ColumnHead>
                  <ColumnHead>图形</ColumnHead>
                  <ColumnHead>计算公式</ColumnHead>
                </tr>
              </thead>
              <tbody>
                {bars.map((b, i) => (
                  <SheetRow key={b.name} $height={b.h}>
                    <RowHead $active={i === 0}>{i === 0 ? '1*' : i + 1}</RowHead>
                    <NameCell>{b.name}</NameCell>
                    <NumberCell $active={i === 0}>{b.d}</NumberCell>
                    <GradeCell><Grade level={b.level} /></GradeCell>
                    <NumberCell>{b.fig}</NumberCell>
                    <ShapeCell>{b.shape}</ShapeCell>
                    <NumberCell>{b.f}</NumberCell>
                  </SheetRow>
                ))}
                <SheetRow $height={19}>
                  <RowHead>6</RowHead>
                  {[0, 1, 2, 3, 4, 5].map(i => <BlankCell key={i} />)}
                </SheetRow>
              </tbody>
            </Sheet>
          </SheetWrap>
        </RightColumn>
      </Workspace>

      <NodeDialog />

      <Marks width="1001" height="654" viewBox="0 0 1001 654" aria-hidden="true">
        <g stroke="#f00808" strokeWidth="3.500">
          <path d="M465 276L982 211" />
          <path d="M538 310L914 263" />
        </g>
        <path d="M978 205l23 4-21 9zM911 257l17 5-15 8z" fill="#f00" />
        <g stroke="#10e030" fill="none">
          <ellipse cx="723" cy="244" rx="31" ry="10" />
          <path d="M723 243L785 476" />
          <ellipse cx="792" cy="495" rx="36" ry="19" />
        </g>
        <path d="M781 475l9-3-2 14z" fill="#00e020" />
        <path d="M1001 386q-8 8-10 28l8 1 2 8z" fill="#fcd24c" stroke="#8a5a20" strokeWidth=".5" />
        <path d="M994 417l7-2v14q-4-8-7-12z" fill="#5a3030" />
      </Marks>
      <Note>
        用基础连系梁定义，画图时与承台边<br />
        接触就行，选择节点1，汇总计算后<br />
        在编辑钢筋里调整上部钢筋的长度，<br />
        再锁定，没有其它好方法。
      </Note>
    </AppShell>
  );
}
